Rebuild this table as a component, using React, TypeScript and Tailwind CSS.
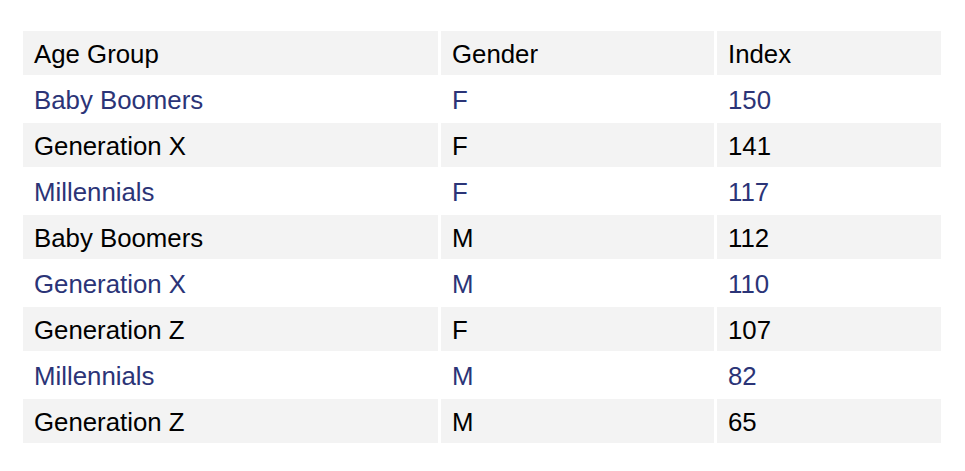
const rows: [string, string, string][] = [
  ["Baby Boomers", "F", "150"],
  ["Generation X", "F", "141"],
  ["Millennials", "F", "117"],
  ["Baby Boomers", "M", "112"],
  ["Generation X", "M", "110"],
  ["Generation Z", "F", "107"],
  ["Millennials", "M", "82"],
  ["Generation Z", "M", "65"],
];

export default function App() {
  return (
    <div className="w-[965px] h-[471px] bg-white pt-[29px] pl-[20px] font-['Liberation_Sans',Arial,sans-serif] text-[25.8px]">
      <table className="border-separate border-spacing-x-[3px] border-spacing-y-[2px]">
        <thead>
          <tr className="h-[44px] bg-[#f3f3f3] text-black">
            <th className="w-[415px] px-[11px] pt-[3px] text-left font-normal">Age Group</th>
            <th className="w-[273px] px-[11px] pt-[3px] text-left font-normal">Gender</th>
            <th className="w-[224px] px-[11px] pt-[3px] text-left font-normal">Index</th>
          </tr>
        </thead>
        <tbody>
          {rows.map((r, i) => (
            <tr
              key={i}
              className={
                i % 2 === 0
                  ? "h-[44px] bg-white text-[#2b3477]"
                  : "h-[44px] bg-[#f3f3f3] text-black"
              }
            >
              <td className="px-[11px] pt-[3px]">{r[0]}</td>
              <td className="px-[11px] pt-[3px]">{r[1]}</td>
              <td className="px-[11px] pt-[3px]">{r[2]}</td>
            </tr>
          ))}
        </tbody>
      </table>
    </div>
  );
}
